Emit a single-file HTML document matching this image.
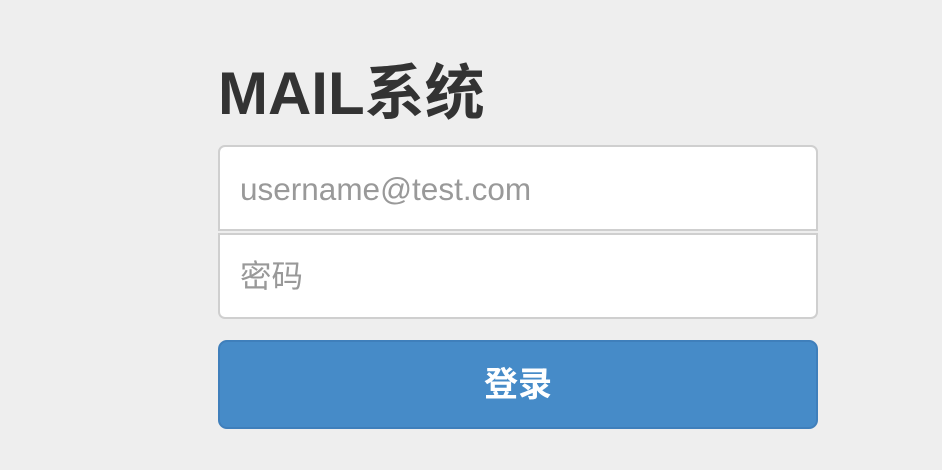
<!DOCTYPE html>
<html><head><meta charset="utf-8"><style>
html,body{margin:0;padding:0;background:#eeeeee;width:942px;height:470px;overflow:hidden}
h1{position:absolute;left:218px;top:57px;margin:0;font:bold 60px/74px "Liberation Sans","Noto Sans CJK SC",sans-serif;color:#333}
.in{position:absolute;left:218px;width:596px;height:82px;background:#fff;border:2px solid #cfcfcf;font:31.5px "Liberation Sans","Noto Sans CJK SC",sans-serif;color:#999;box-sizing:content-box}
.in span{position:absolute;left:20px;top:23px;line-height:38px}
.b{position:absolute;left:218px;top:340px;width:596px;height:85px;background:#468bc8;border:2px solid #3f7fbb;border-radius:9px;color:#fff;font:bold 34px/87px "Liberation Sans","Noto Sans CJK SC",sans-serif;text-align:center}
</style></head><body>
<h1>MAIL系统</h1>
<div class="in" style="top:145px;border-radius:7px 7px 0 0"><span>username@test.com</span></div>
<div class="in" style="top:233px;border-radius:0 0 7px 7px"><span style="top:22px">密码</span></div>
<div class="b">登录</div>
</body></html>
